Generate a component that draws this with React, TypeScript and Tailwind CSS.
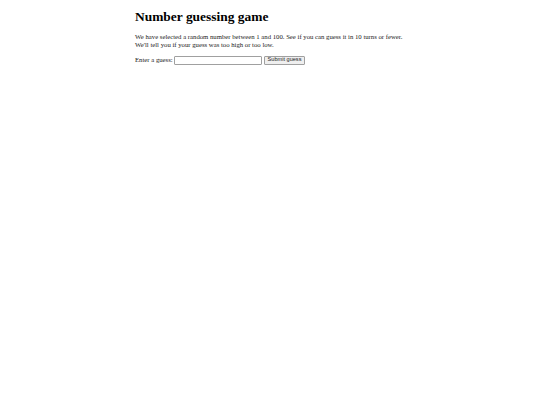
export default function App() {
  return (
    <div className="w-[540px] h-[405px] bg-white text-[#1a1a1a]" style={{ fontFamily: '"Liberation Serif", "Times New Roman", serif' }}>
      <div className="w-[270px] mx-auto pt-[9px] text-[6.72px] leading-[1.15]">
        <h1 className="text-[13.44px] font-bold leading-[1.15] mb-[9px] text-black">Number guessing game</h1>
        <p className="mb-[6.72px]">
          We have selected a random number between 1 and 100. See if you can guess it in 10 turns or fewer.
          <br />
          We'll tell you if your guess was too high or too low.
        </p>
        <div className="flex items-center">
          <label htmlFor="guessField" className="mr-[1.7px]">Enter a guess: </label>
          <input
            id="guessField"
            type="text"
            className="w-[88px] h-[9px] border border-[#a0a0a0] rounded-[1px] bg-white"
          />
          <button
            className="ml-[1.7px] h-[9px] px-[2.5px] flex items-center justify-center text-[5.6px] border border-[#a0a0a0] rounded-[1px] bg-[#efefef] leading-none text-[#222]"
            style={{ fontFamily: '"Liberation Sans", Arial, sans-serif' }}
          >
            Submit guess
          </button>
        </div>
      </div>
    </div>
  );
}
